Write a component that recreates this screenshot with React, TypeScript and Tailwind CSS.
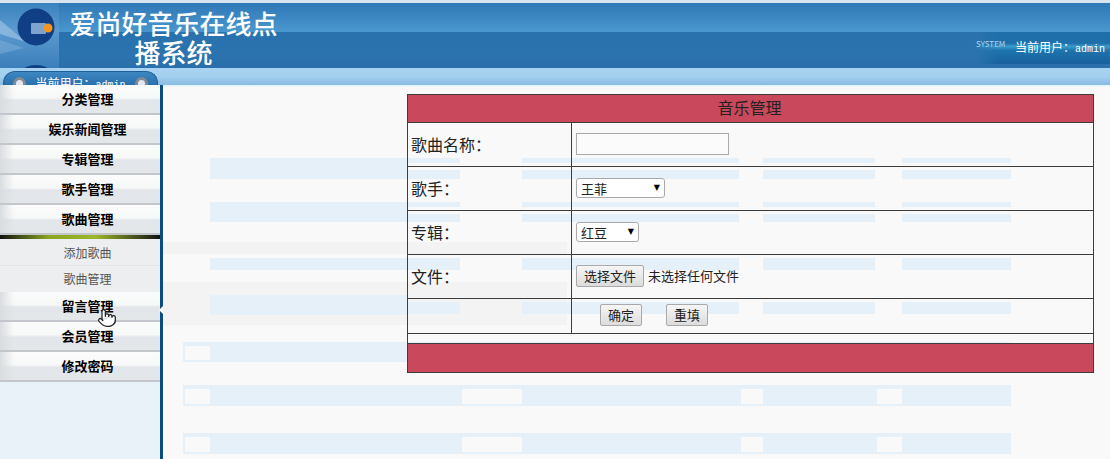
import React from "react";
import { Pointer } from "lucide-react";

const font = "font-['Noto_Sans_CJK_SC','Liberation_Sans',sans-serif]";
const btn =
  "border border-[#a9a9a9] rounded-[2px] bg-[linear-gradient(#f6f6f6,#dcdcdc)] text-[13px] text-[#222] h-[22px] flex items-center justify-center";

function MenuItem({ label }: { label: string }) {
  return (
    <div className="h-[30px] pl-[15px] flex items-center justify-center text-[13px] font-bold text-black border-b-2 border-[#c3c7cc] bg-[linear-gradient(90deg,#d9dde0_0px,rgba(255,255,255,0)_14px),linear-gradient(#fbfbfb_0%,#f7f8f8_45%,#e2e5e9_55%,#e4e7ea_100%)]">
      {label}
    </div>
  );
}

function SubItem({ label, line }: { label: string; line?: boolean }) {
  return (
    <div className={`h-[26px] pl-[15px] flex items-center justify-center text-[12px] text-[#555] ${line ? "border-b border-[#e3e5e7]" : ""}`}>
      {label}
    </div>
  );
}

type GhostKind = "plain" | "split" | "inset" | "framed";

const kindClass: Record<GhostKind, string> = {
  plain: "bg-[#e6f0f8]",
  framed: "bg-[#e6f0f8]",
  split: "bg-[linear-gradient(#e6f0f8_5px,transparent_5px,transparent_12px,#e6f0f8_12px)]",
  inset: "bg-[linear-gradient(transparent_7px,#e6f0f8_7px,#e6f0f8_19px,transparent_19px)]",
};

function Ghost({ h, mt, kind = "plain" }: { h: number; mt: number; kind?: GhostKind }) {
  const segments = [
    { w: 27, blue: false },
    { w: 197, blue: true, solid: true },
    { w: 53, blue: true },
    { w: 62, blue: false },
    { w: 217, blue: true },
    { w: 24, blue: false },
    { w: 112, blue: true },
    { w: 27, blue: false },
    { w: 109, blue: true },
  ];
  return (
    <div className="flex ml-[20px] w-[828px]" style={{ height: h, marginTop: mt }}>
      {segments.map((s, i) => (
        <div
          key={i}
          className={
            s.blue
              ? s.solid
                ? "bg-[#e6f0f8]"
                : kindClass[kind]
              : kind === "framed"
                ? "border-t-4 border-b-2 border-l-2 border-[#e6f0f8]"
                : ""
          }
          style={{ width: s.w }}
        />
      ))}
    </div>
  );
}

function Label({ children }: { children: React.ReactNode }) {
  return <td className="border border-[#3d3d3d] pl-[3px] pb-[2px] text-[16px] text-[#222]">{children}</td>;
}

function Select({ label, w }: { label: string; w: number }) {
  return (
    <div className="relative" style={{ width: w }}>
      <select
        aria-label={label}
        className="block w-full h-[20px] appearance-none border border-[#a9a9a9] rounded-[3px] bg-white text-[13px] text-[#222] pl-[4px]"
        defaultValue={label}
      >
        <option>{label}</option>
      </select>
      <span className="absolute right-[5px] top-[5px] text-[8px] leading-[10px] text-black pointer-events-none font-['DejaVu_Sans',sans-serif]">
        ▼
      </span>
    </div>
  );
}

export default function App() {
  return (
    <div className={`${font} w-[1110px] h-[459px] overflow-hidden flex flex-col bg-[#f9f9f9]`}>
      <header className="h-[68px] shrink-0 flex bg-[linear-gradient(#d9e5ee_0,#d9e5ee_3px,#2f78b6_3px,#4a97cf_32px,#2a72ad_32px,#2b73ae_56px,#2a6fab_68px)] overflow-hidden">
        <div className="relative w-[59px] h-full shrink-0 bg-[linear-gradient(#d9e5ee_0,#d9e5ee_3px,#3a82bd_3px,#5c9ad0_30px,#3b7fba_68px)]">
          <svg viewBox="0 0 59 68" className="absolute inset-0 w-[59px] h-[68px]">
            <path d="M0 20 L26 42 L0 34 Z" fill="#a4c8e8" opacity="0.6" />
            <path d="M0 40 L24 48 L0 54 Z" fill="#8cb8de" opacity="0.4" />
            <circle cx="36" cy="27" r="18.5" fill="#103f86" />
            <rect x="31" y="23" width="15" height="11" rx="1" fill="#7fa3cf" />
            <circle cx="48" cy="28" r="4.5" fill="#f7941d" />
            <ellipse cx="36" cy="76" rx="17" ry="11" fill="#103f86" />
          </svg>
        </div>
        <h1 className="w-[209px] ml-[10px] pt-[8px] text-center text-[26px] leading-[29px] font-medium text-white">
          爱尚好音乐在线点播系统
        </h1>
        <div className="ml-auto self-end h-[32px] mb-[4px] w-[135px] flex items-center bg-[linear-gradient(90deg,#2b73ae_0,transparent_18%),linear-gradient(#1f6fab_0,#1f6fab_35%,#3a9ccb_45%,#1e74ad_58%,#17609e_100%)]">
          <span className="w-[40px] pl-[1px] text-[8px] text-[#a9d6ec] -mt-[9px] whitespace-nowrap">SYSTEM</span>
          <span className="text-[12px] -mt-[2px] text-white flex items-baseline whitespace-nowrap">
            当前用户：
            <span className="font-['Liberation_Mono',monospace] text-[10px]">admin</span>
          </span>
        </div>
      </header>

      <div className="h-[17px] shrink-0 flex items-end pl-[3px] bg-[linear-gradient(#a9d3f1,#a4cfee_50%,#88bbe2)]">
        <div className="w-[155px] h-[14px] rounded-t-[12px] border border-b-0 border-[#1f5f95] bg-[linear-gradient(#3d87c3,#2a70ac)] overflow-hidden flex justify-between items-start pl-[9px] pr-[9px] pt-[5px] text-[12px] leading-[12px] text-white">
          <span className="w-[13px] h-[13px] rounded-full bg-[#e3e8ec] border-[3px] border-[#7f8a94] shrink-0" />
          <span className="flex items-baseline whitespace-nowrap">
            当前用户：
            <span className="font-['Liberation_Mono',monospace] text-[10px]">admin</span>
          </span>
          <span className="w-[13px] h-[13px] rounded-full bg-[#e3e8ec] border-[3px] border-[#7f8a94] shrink-0" />
        </div>
      </div>

      <div className="flex flex-1 min-h-0">
        <nav className="relative w-[163px] shrink-0 bg-[#e9f1f9] border-r-[3px] border-[#0b4d7f]">
          <MenuItem label="分类管理" />
          <MenuItem label="娱乐新闻管理" />
          <MenuItem label="专辑管理" />
          <MenuItem label="歌手管理" />
          <MenuItem label="歌曲管理" />
          <div className="h-[4px] bg-[linear-gradient(90deg,#111_0,#8aa520_30%,#9db62a_60%,#111_100%)]" />
          <div className="h-[53px] bg-[#eceef0] pt-[1px]">
            <SubItem label="添加歌曲" line />
            <SubItem label="歌曲管理" />
          </div>
          <MenuItem label="留言管理" />
          <MenuItem label="会员管理" />
          <MenuItem label="修改密码" />
          <Pointer className="absolute left-[97px] top-[222px] w-[20px] h-[22px] fill-white text-[#222]" strokeWidth={1.5} />
          <div className="absolute right-[-3px] top-[221px] w-0 h-0 border-y-[4px] border-y-transparent border-r-[4px] border-r-white" />
        </nav>

        <main className="relative flex-1 border-t-2 border-[#e8f5fb]">
          <Ghost h={21} mt={71} kind="split" />
          <Ghost h={20} mt={23} kind="split" />
          <div className="mt-[20px] h-[12px] bg-[#f3f3f3] w-[404px]" />
          <Ghost h={12} mt={4} />
          <div className="mt-[12px] h-[43px] w-[404px] bg-[#f3f3f3] pt-[13px]">
            <Ghost h={20} mt={0} kind="inset" />
          </div>
          <Ghost h={20} mt={17} kind="framed" />
          <Ghost h={21} mt={23} kind="framed" />
          <Ghost h={21} mt={27} kind="framed" />

          <table className="absolute left-[244px] top-[7px] w-[687px] border-collapse table-fixed">
            <colgroup>
              <col className="w-[164px]" />
              <col />
            </colgroup>
            <tbody>
              <tr className="h-[28px]">
                <td colSpan={2} className="border border-[#3d3d3d] bg-[#c9485b] text-center pb-[3px] pr-[2px] text-[16px] text-[#222]">
                  音乐管理
                </td>
              </tr>
              <tr className="h-[44px]">
                <Label>歌曲名称：</Label>
                <td className="border border-[#3d3d3d] pl-[4px] pb-[2px]">
                  <input aria-label="歌曲名称" className="block w-[153px] h-[22px] border border-[#a9a9a9] bg-[#fbfbfb]" />
                </td>
              </tr>
              <tr className="h-[44px]">
                <Label>歌手：</Label>
                <td className="border border-[#3d3d3d] pl-[4px] pb-[2px]">
                  <Select label="王菲" w={89} />
                </td>
              </tr>
              <tr className="h-[44px]">
                <Label>专辑：</Label>
                <td className="border border-[#3d3d3d] pl-[4px] pb-[2px]">
                  <Select label="红豆" w={63} />
                </td>
              </tr>
              <tr className="h-[44px]">
                <Label>文件：</Label>
                <td className="border border-[#3d3d3d] pl-[4px] pb-[2px]">
                  <div className="flex items-center gap-[4px] text-[13px] text-[#222]">
                    <button className={`${btn} w-[68px]`}>选择文件</button>
                    未选择任何文件
                  </div>
                </td>
              </tr>
              <tr className="h-[35px]">
                <td className="border border-[#3d3d3d]" />
                <td className="border border-[#3d3d3d] pl-[28px] pb-[2px]">
                  <div className="flex gap-[24px]">
                    <button className={`${btn} w-[42px]`}>确定</button>
                    <button className={`${btn} w-[42px]`}>重填</button>
                  </div>
                </td>
              </tr>
              <tr className="h-[10px]">
                <td colSpan={2} className="border border-[#3d3d3d]" />
              </tr>
              <tr className="h-[29px]">
                <td colSpan={2} className="border border-[#3d3d3d] bg-[#c9485b]" />
              </tr>
            </tbody>
          </table>
        </main>
      </div>
    </div>
  );
}
